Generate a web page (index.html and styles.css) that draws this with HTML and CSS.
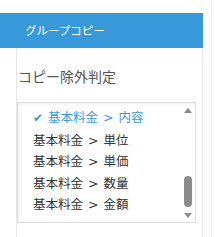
FILE: index.html
```html
<!DOCTYPE html>
<html lang="ja">
<head>
  <meta charset="UTF-8">
  <meta name="viewport" content="width=device-width, initial-scale=1.0">
  <title>グループコピー</title>
  <link rel="stylesheet" href="styles.css">
</head>
<body>
  <div class="sidebar">
    <div class="group-title">グループコピー</div>

    <div class="panel">
      <div class="field-label">コピー除外判定</div>

      <!-- Exclusion list -->
      <div class="listbox">
        <ul class="options">
          <li class="selected"><span class="check">&#10004;</span>基本料金 &gt; 内容</li>
          <li>基本料金 &gt; 単位</li>
          <li>基本料金 &gt; 単価</li>
          <li>基本料金 &gt; 数量</li>
          <li>基本料金 &gt; 金額</li>
        </ul>
        <div class="scrollbar">
          <span class="arrow up"></span>
          <span class="thumb"></span>
          <span class="arrow down"></span>
        </div>
      </div>
    </div>
  </div>
</body>
</html>
```

FILE: styles.css
```css
body {
  margin: 0;
  padding: 0;
  background-color: #fff;
  font-family: "Noto Sans CJK JP", "Noto Sans", sans-serif;
}
.sidebar {
  width: 212px;
  height: 237px;
  box-sizing: border-box;
  padding-top: 13px;
  border-right: 1px solid #efefef;
  display: flex;
  flex-direction: column;
}
.group-title {
  width: 203px;
  height: 35px;
  box-sizing: border-box;
  padding-left: 25px;
  background-color: #3899da;
  color: #fff;
  font-size: 11.5px;
  line-height: 35px;
}
.panel {
  flex: 1;
  margin-left: 16px;
  width: 187px;
  box-sizing: border-box;
  border-left: 1px solid #e6e6e6;
  border-right: 1px solid #e6e6e6;
}
.field-label {
  padding: 18px 0 0 1px;
  height: 36px;
  font-size: 14px;
  line-height: 20px;
  color: #555;
}
.listbox {
  display: flex;
  width: 179px;
  height: 121px;
  box-sizing: border-box;
  border: 1px solid #dedede;
  box-shadow: inset 1px 1px 3px rgba(0, 0, 0, 0.06);
}
.options {
  flex: 1;
  list-style: none;
  margin: 0;
  padding: 4px 0 0 15px;
  font-family: "DejaVu Sans", "Noto Sans CJK JP", sans-serif;
  font-size: 12.5px;
  line-height: 21.5px;
  word-spacing: 1px;
  color: #333;
}
.options li {
  white-space: nowrap;
}
.options li.selected {
  color: #3a9ad9;
}
.check {
  display: inline-block;
  width: 15px;
  font-size: 12px;
}
.scrollbar {
  width: 14px;
  display: flex;
  flex-direction: column;
  align-items: center;
  padding: 5px 0 4px;
}
.arrow {
  width: 0;
  height: 0;
  border-left: 4px solid transparent;
  border-right: 4px solid transparent;
}
.arrow.up {
  border-bottom: 5px solid #8a8a8a;
}
.arrow.down {
  border-top: 5px solid #8a8a8a;
}
.thumb {
  width: 8px;
  height: 31px;
  margin-top: auto;
  margin-bottom: 6px;
  border-radius: 4px;
  background-color: #8c8c8c;
}
```
